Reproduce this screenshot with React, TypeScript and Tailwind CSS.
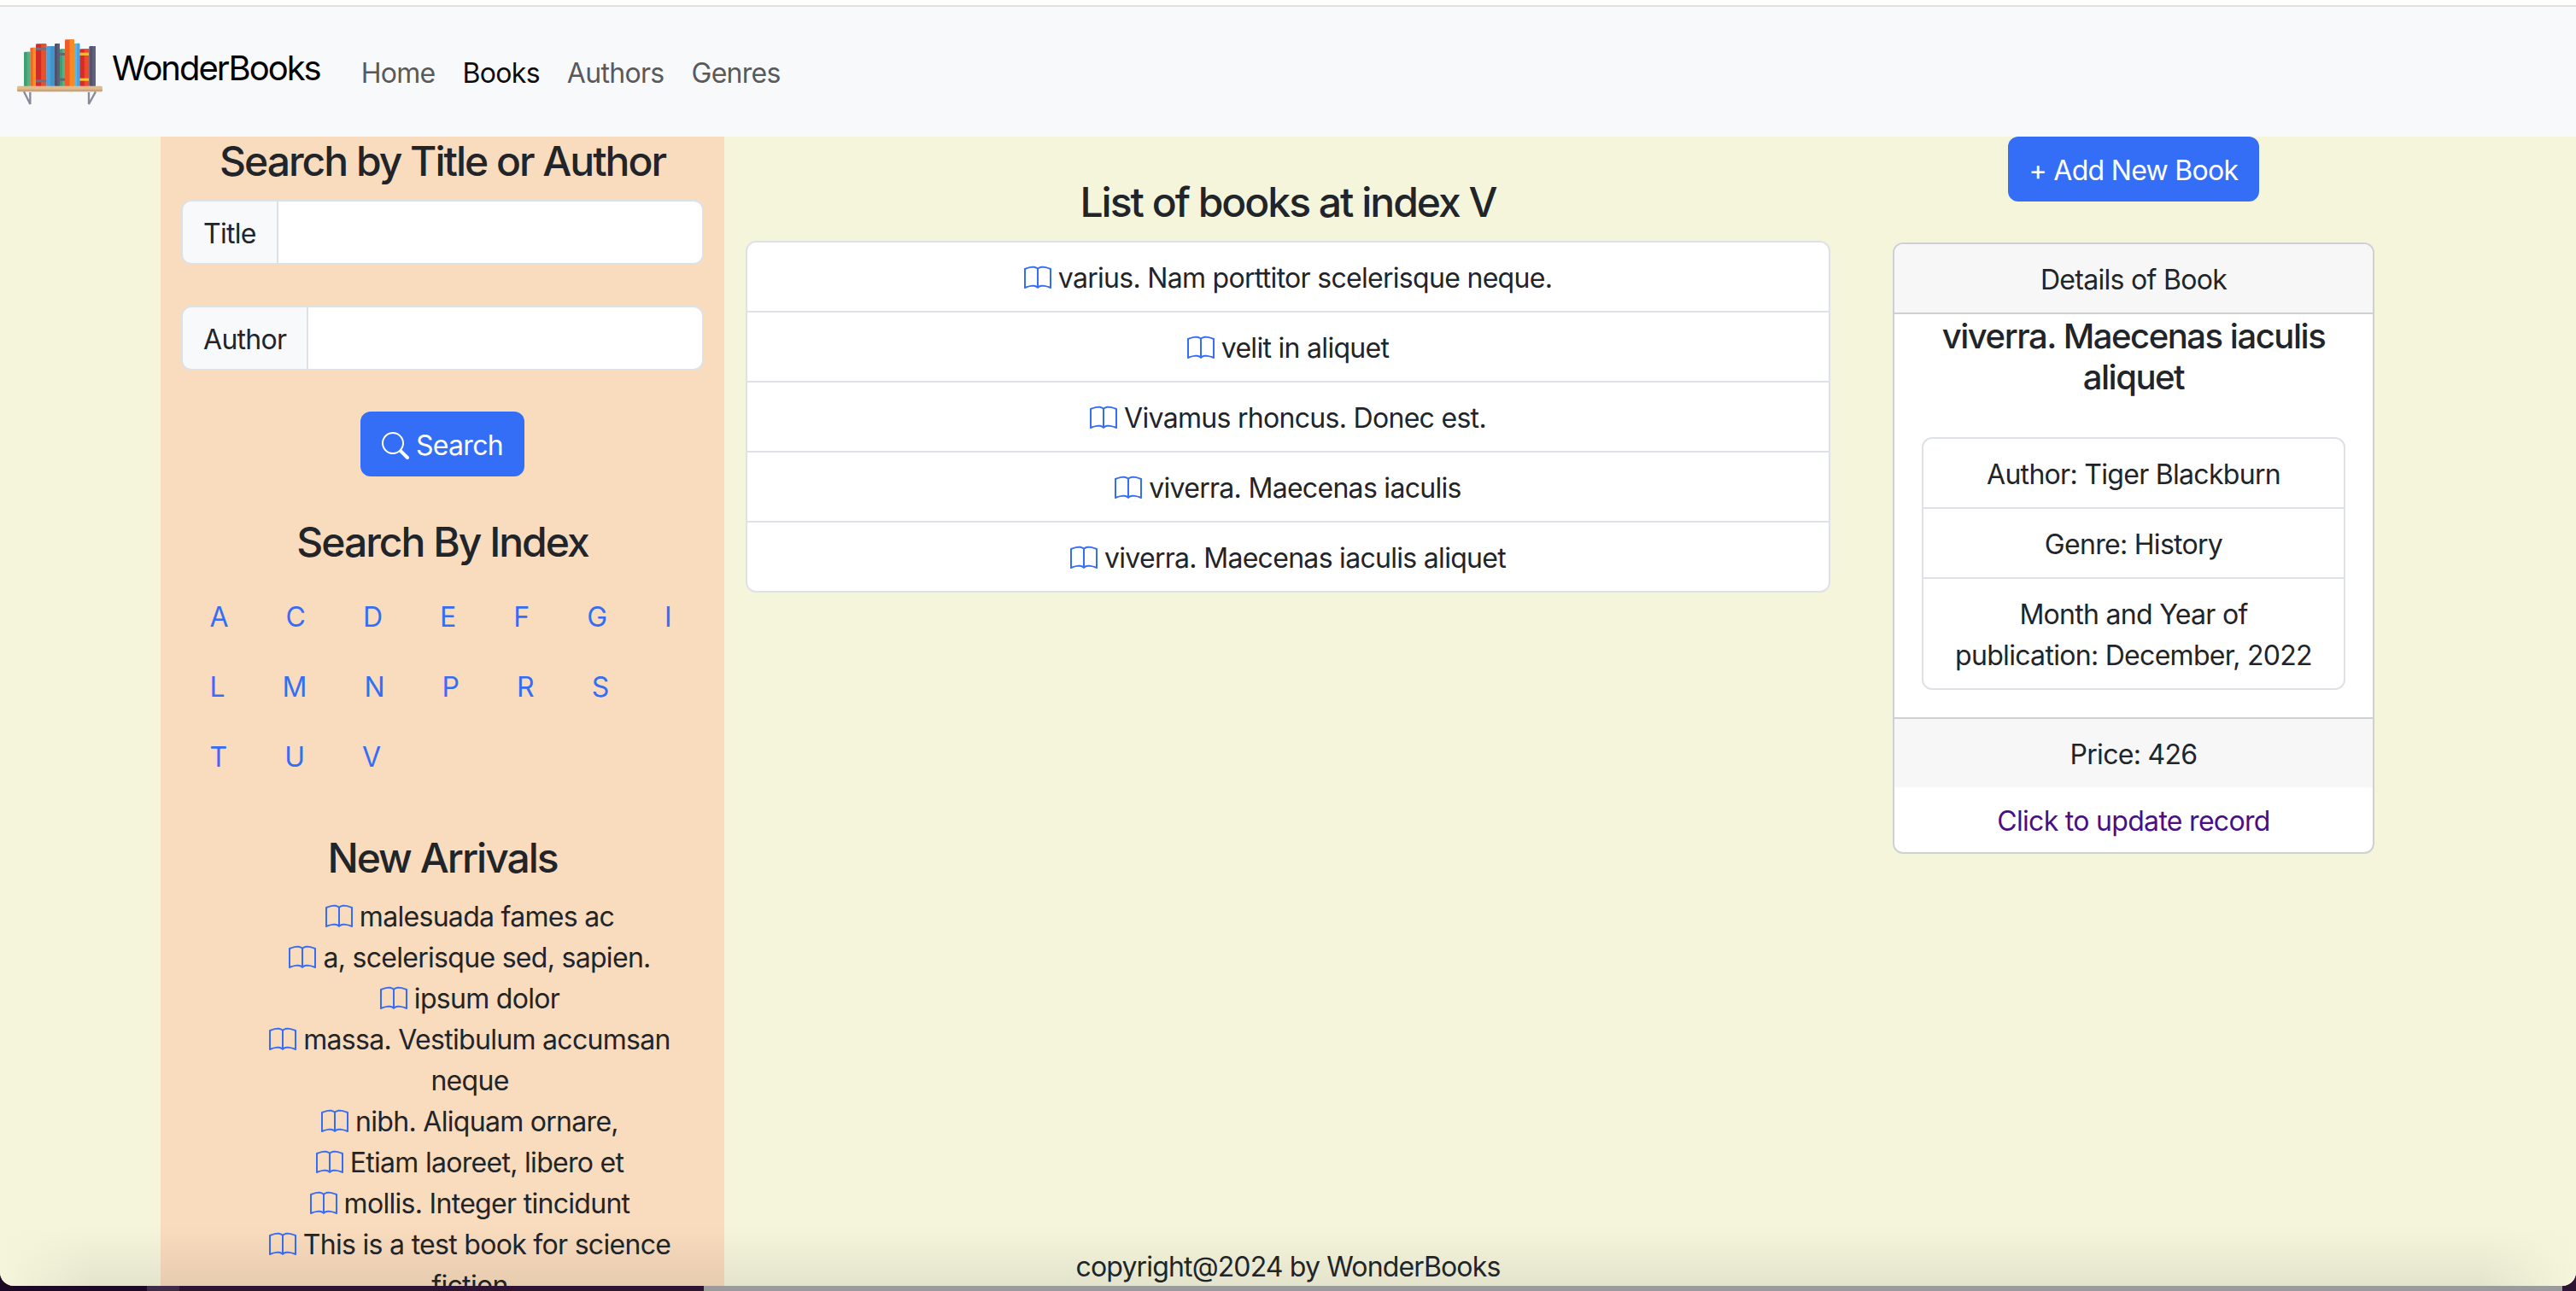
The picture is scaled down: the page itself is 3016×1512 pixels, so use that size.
import React from "react";
import { BsBook, BsSearch } from "react-icons/bs";

const indexLetters = ["A", "C", "D", "E", "F", "G", "I", "L", "M", "N", "P", "R", "S", "T", "U", "V"];

const listBooks = [
  "varius. Nam porttitor scelerisque neque.",
  "velit in aliquet",
  "Vivamus rhoncus. Donec est.",
  "viverra. Maecenas iaculis",
  "viverra. Maecenas iaculis aliquet",
];

const newArrivals = [
  "malesuada fames ac",
  "a, scelerisque sed, sapien.",
  "ipsum dolor",
  "massa. Vestibulum accumsan neque",
  "nibh. Aliquam ornare,",
  "Etiam laoreet, libero et",
  "mollis. Integer tincidunt",
  "This is a test book for science fiction",
];

// Shelf logo, coordinates taken from the reference at 3x
function ShelfLogo() {
  const book = (x: number, w: number, top: number, fill: string, shade: string) => (
    <g key={x}>
      <rect x={x} y={top} width={w} height={242 - top} rx="4" fill={fill} />
      <rect x={x + w / 2} y={top} width={w / 2} height={242 - top} rx="3" fill={shade} />
    </g>
  );
  return (
    <svg viewBox="60 70 300 240" className="h-[80px] w-[100px] shrink-0">
      {book(84, 22, 120, "#3f9f73", "#54b184")}
      {book(106, 20, 105, "#ee6a28", "#f78f22")}
      {book(126, 37, 92, "#cf2b2b", "#e9512d")}
      <rect x="126" y="105" width="37" height="9" fill="#75707f" />
      <rect x="126" y="218" width="37" height="9" fill="#75707f" />
      {book(163, 29, 100, "#4aa3da", "#3f94c9")}
      {book(192, 18, 91, "#4f5069", "#5c5d78")}
      {book(210, 18, 110, "#3f9f73", "#54b184")}
      <rect x="210" y="124" width="18" height="9" fill="#62667a" />
      <rect x="210" y="213" width="18" height="9" fill="#62667a" />
      {book(228, 33, 77, "#ef5a2a", "#f68c20")}
      {book(261, 19, 90, "#5cb6ea", "#4aa3da")}
      {book(280, 33, 110, "#d32d2b", "#ee4b2c")}
      <rect x="280" y="123" width="33" height="10" fill="#f6b62f" />
      <rect x="280" y="213" width="33" height="9" fill="#f6c52f" />
      {book(313, 23, 100, "#52536e", "#5f607c")}
      <rect x="60" y="240" width="300" height="20" rx="5" fill="#e2bb8b" />
      <rect x="60" y="252" width="300" height="8" rx="4" fill="#c6a47f" />
      <path d="M84 260 L106 304 L106 262" fill="none" stroke="#8b8a9c" strokeWidth="7" />
      <path d="M336 260 L312 304 L312 262" fill="none" stroke="#8b8a9c" strokeWidth="7" />
    </svg>
  );
}

function Navbar() {
  return (
    <nav className="flex h-[154px] shrink-0 items-center border-t-2 border-[#e0e2de] bg-[#f8f9fa] pl-5">
      <a className="mr-[32px] flex items-center gap-[11px] text-[40px] leading-[60px] tracking-[-2px] text-black">
        <ShelfLogo />
        <span className="-mt-2">WonderBooks</span>
      </a>
      <div className="mt-1 flex text-[32px] leading-[48px] tracking-[-0.7px] text-[#59595a]">
        <a className="px-4">Home</a>
        <a className="px-4 text-[#0c0c0d]">Books</a>
        <a className="px-4">Authors</a>
        <a className="px-4">Genres</a>
      </div>
    </nav>
  );
}

function InputRow({ label }: { label: string }) {
  return (
    <div className="mb-12 flex">
      <span className="rounded-l-[12px] border-2 border-[#dee2e6] bg-[#f8f9fa] px-6 pt-[14px] pb-[10px] text-[32px] leading-[48px]">
        {label}
      </span>
      <input className="-ml-[2px] min-w-0 flex-1 rounded-r-[12px] border-2 border-[#dee2e6] bg-white" />
    </div>
  );
}

function Sidebar() {
  return (
    <aside className="h-full overflow-hidden bg-[#f9dbbd] px-6">
      <h4 className="mb-4 text-center text-[48px] leading-[58px] font-medium tracking-[-2px]">Search by Title or Author</h4>
      <InputRow label="Title" />
      <InputRow label="Author" />
      <div className="mb-12 flex justify-center">
        <button className="flex items-center gap-2 rounded-[12px] bg-[#356ef6] px-[25px] pt-[14px] pb-[10px] text-[32px] leading-[52px] text-white">
          <BsSearch className="size-8" />
          Search
        </button>
      </div>
      <h4 className="mb-4 text-center text-[48px] leading-[58px] font-medium tracking-[-2px]">Search By Index</h4>
      <ul className="mr-[-6px] mb-[50px] flex flex-wrap">
        {indexLetters.map((l) => (
          <li key={l}>
            <a className="block px-[33.5px] pt-[19px] pb-[15px] text-[32px] leading-[48px] tracking-normal text-[#356ef6]">{l}</a>
          </li>
        ))}
      </ul>
      <h4 className="mb-4 text-center text-[48px] leading-[58px] font-medium tracking-[-2px]">New Arrivals</h4>
      <ul className="pl-16 text-center text-[32px] leading-[48px]">
        {newArrivals.map((b) => (
          <li key={b}>
            <BsBook className="mr-2 inline size-8 align-[-5px] text-[#356ef6]" />
            {b}
          </li>
        ))}
      </ul>
    </aside>
  );
}

function BookList() {
  return (
    <main className="px-[25px] pt-12">
      <h4 className="mb-4 text-center text-[48px] leading-[58px] font-medium tracking-[-2px]">List of books at index V</h4>
      <ul className="overflow-hidden rounded-[12px] border-2 border-[#dee2e6] bg-white">
        {listBooks.map((b, i) => (
          <li
            key={b}
            className={`px-8 pt-[18px] pb-[14px] text-center text-[32px] leading-[48px] ${i > 0 ? "border-t-2 border-[#dee2e6]" : ""}`}
          >
            <BsBook className="mr-2 inline size-8 align-[-5px] text-[#356ef6]" />
            {b}
          </li>
        ))}
      </ul>
    </main>
  );
}

function DetailsColumn() {
  return (
    <section className="px-12">
      <div className="mb-12 flex justify-center">
        <button className="rounded-[12px] bg-[#356ef6] px-[25px] pt-[14px] pb-[10px] text-[32px] leading-[52px] text-white">
          + Add New Book
        </button>
      </div>
      <div className="overflow-hidden rounded-[12px] border-2 border-[#cfd0d2] bg-white text-center text-[32px] leading-[48px]">
        <div className="border-b-2 border-[#cfd0d2] bg-[#f7f7f7] px-8 pt-[18px] pb-[14px]">Details of Book</div>
        <div className="px-8">
          <h5 className="mb-[46px] pt-[2px] text-[40px] leading-[48px] font-medium tracking-[-1.46px]">viverra. Maecenas iaculis aliquet</h5>
          <ul className="mb-8 rounded-[12px] border-2 border-[#dee2e6]">
            <li className="px-8 pt-[18px] pb-[14px]">Author: Tiger Blackburn</li>
            <li className="border-t-2 border-[#dee2e6] px-8 pt-[18px] pb-[14px]">Genre: History</li>
            <li className="border-t-2 border-[#dee2e6] px-8 pt-[18px] pb-[14px]">Month and Year of publication: December, 2022</li>
          </ul>
        </div>
        <div className="border-t-2 border-[#cfd0d2] bg-[#f7f7f7] px-8 pt-[18px] pb-[14px]">Price: 426</div>
        <a className="block px-8 pt-[16px] pb-[12px] text-[#4a0e86]">Click to update record</a>
      </div>
    </section>
  );
}

export default function App() {
  return (
    <div className="h-[1512px] overflow-hidden bg-[linear-gradient(to_right,#1c0a24_172px,#3f2a48_172px,#3f2a48_210px,#2d1433_210px,#2d1433_824px,#9b9b9b_824px,#9b9b9b_3000px,#2d1433_3000px)] font-['Inter',sans-serif] tracking-[-0.7px] text-[#212529]">
      <div className="relative flex h-[1506px] flex-col overflow-hidden rounded-b-[16px] bg-[#f5f5dc]">
        <div className="h-[6px] shrink-0 bg-white" />
        <Navbar />
        <div className="mx-auto grid min-h-0 w-[2640px] flex-1 grid-cols-[660px_1320px_660px]">
          <Sidebar />
          <BookList />
          <DetailsColumn />
        </div>
        {/* window shadow along the bottom edge, fading out at the corners */}
        <div className="pointer-events-none absolute inset-x-0 bottom-0 h-[70px] bg-gradient-to-b from-transparent to-black/[0.07]" />
        <div className="pointer-events-none absolute bottom-0 left-0 h-[70px] w-[110px] bg-gradient-to-r from-[#f5f5dc] to-transparent" />
        <div className="pointer-events-none absolute right-0 bottom-0 h-[70px] w-[110px] bg-gradient-to-l from-[#f5f5dc] to-transparent" />
        <footer className="absolute inset-x-0 bottom-[-2px] text-center text-[32px] leading-[48px] tracking-[-0.85px]">
          copyright@2024 by WonderBooks
        </footer>
      </div>
    </div>
  );
}
